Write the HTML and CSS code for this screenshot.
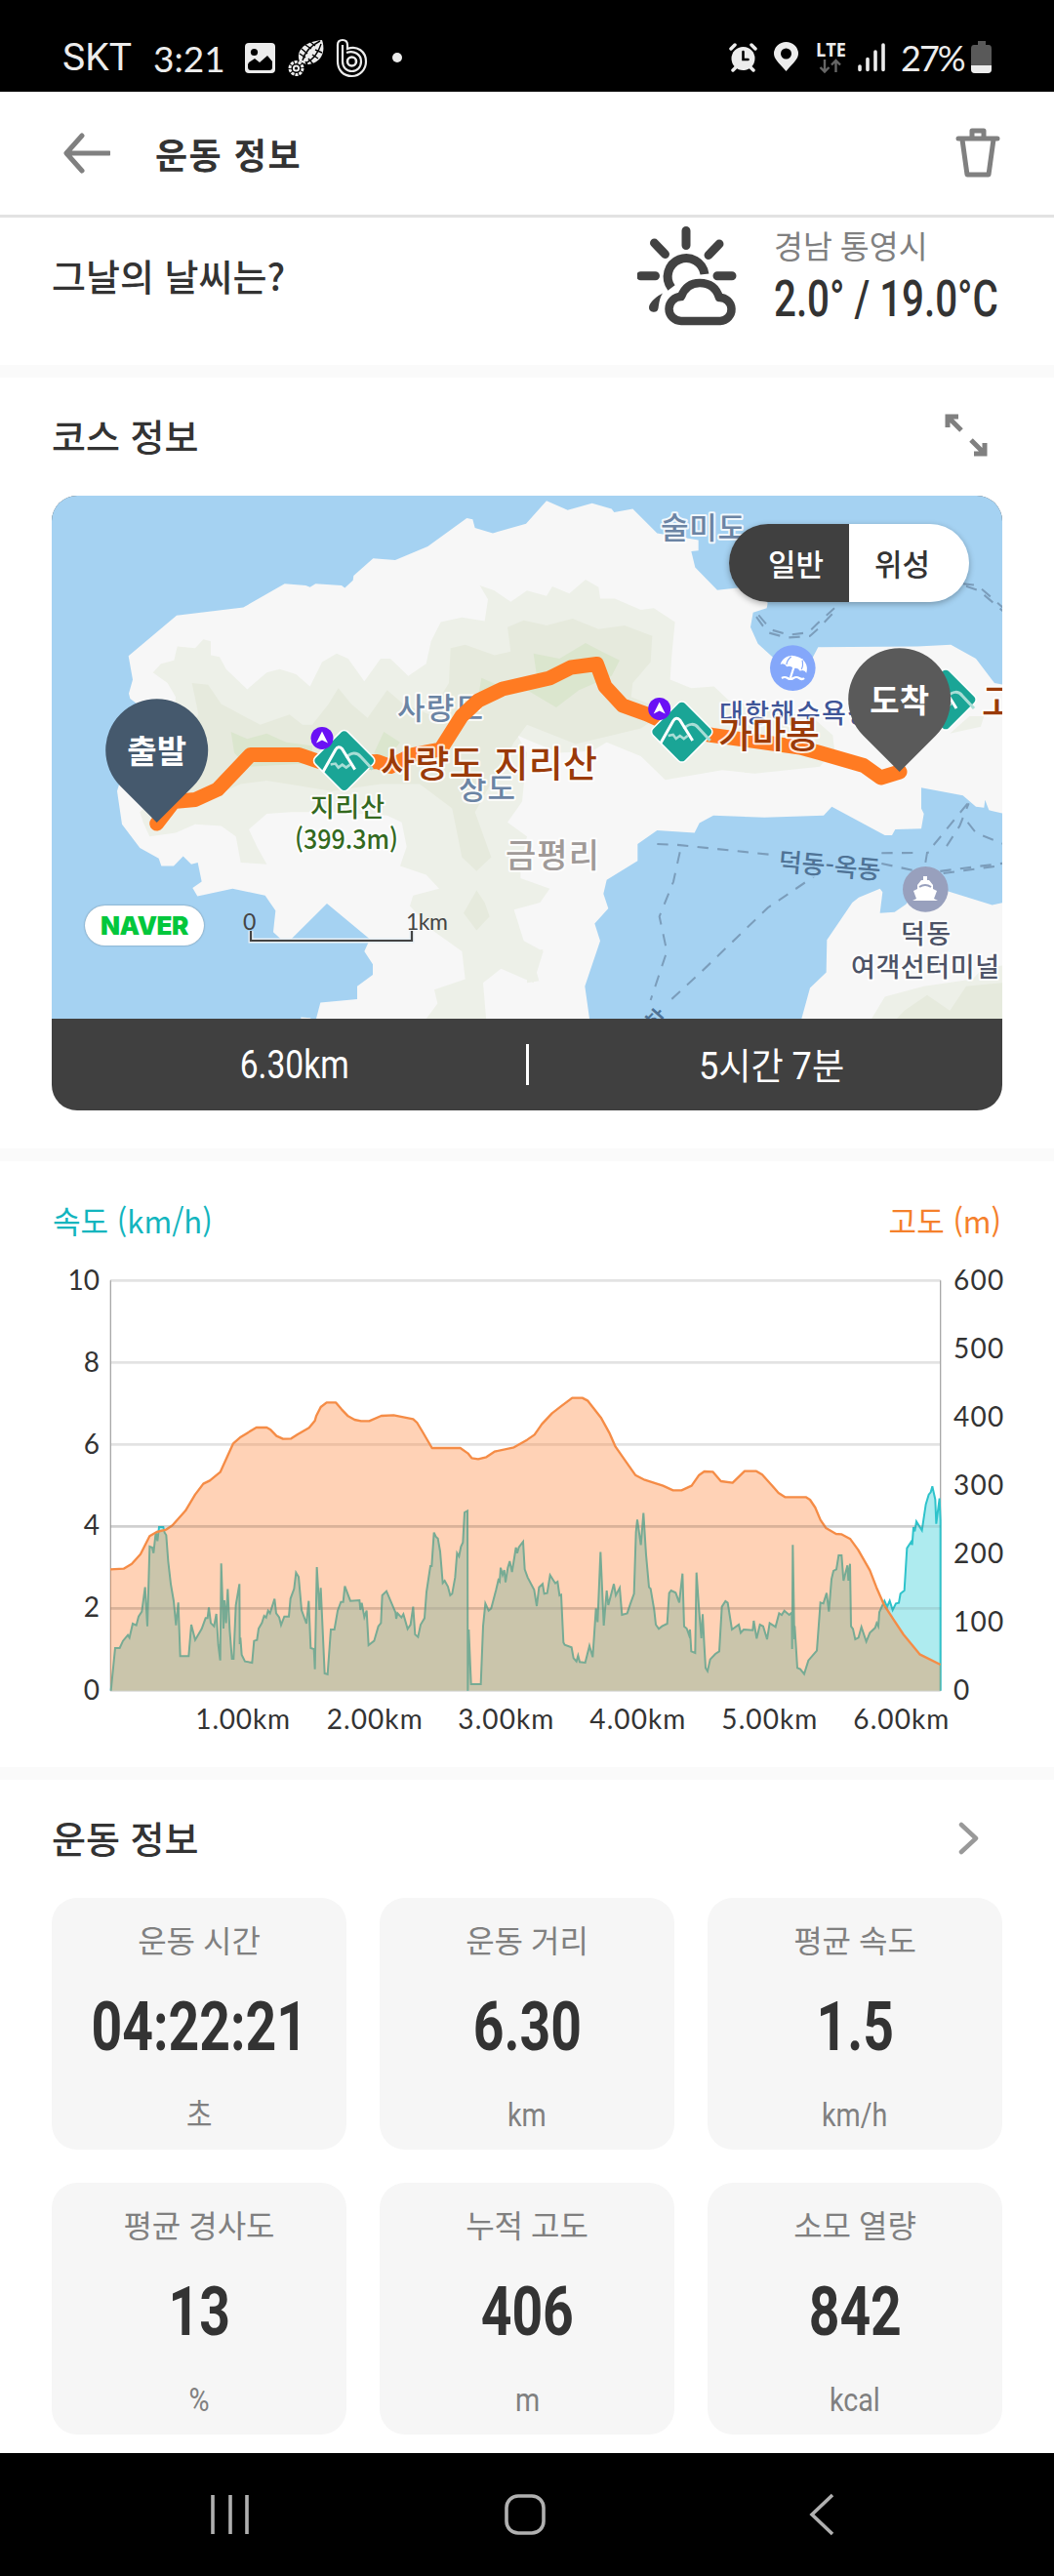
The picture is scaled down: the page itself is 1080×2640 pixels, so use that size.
FILE: index.html
```
<!DOCTYPE html>
<html lang="ko">
<head>
    <meta charset="UTF-8">
    <meta name="viewport" content="width=device-width, initial-scale=1.0">
    <title>운동 정보</title>
    <link rel="stylesheet" href="styles.css">
</head>
<body>
    <!-- Status bar -->
    <div class="status-bar">
        <span class="carrier">SKT</span>
        <span class="clock">3:21</span>
        <svg class="status-left" width="170" height="44" viewBox="250 37 170 44">
            <path d="M255 44h23q4 0 4 4v23q0 4-4 4h-23q-4 0-4-4v-23q0-4 4-4z" fill="#ececec"/>
            <circle cx="260.500" cy="53.500" r="3.600" fill="#000"/>
            <path d="M255 64l6-4 5 4 8-7 5 6v6q0 3-3 3h-19q-3 0-3-3v-3z" fill="#000"/>
            <path d="M307 63c-4-9 2-20 23-22 5 15-4 25-16 25z" fill="#ececec"/>
            <path d="M310 62c2-8 8-15 18-20M313 65c8-4 13-10 16-20" fill="none" stroke="#000" stroke-width="1.400"/>
            <path d="M307 55l6 4M309 50l6 5M313 46l6 4M318 43l5 4M316 60l5 6M320 56l6 4M323 51l7 3M313 63l3 5" stroke="#000" stroke-width="1.400"/>
            <circle cx="303.500" cy="70" r="6.500" fill="none" stroke="#ececec" stroke-width="3" stroke-dasharray="3 1"/>
            <circle cx="303.500" cy="70" r="2.600" fill="none" stroke="#ececec" stroke-width="2"/>
            <path d="M346 63V46q0-5 5-5t5 5v4c10-4 19 3 19 13 0 8-6 15-14.500 15S346 72 346 63z" fill="none" stroke="#ececec" stroke-width="2.200"/>
            <path d="M351 46v17M355 54c8-3 15 2 15 9 0 6-4 10-9.500 10S351 69 351 63" fill="none" stroke="#ececec" stroke-width="2.200"/>
            <circle cx="360.500" cy="63" r="4.500" fill="none" stroke="#ececec" stroke-width="2.600"/>
            <circle cx="407" cy="59" r="5" fill="#ececec"/>
        </svg>
        <svg class="status-right" width="166" height="44" viewBox="745 37 166 44">
            <g fill="#ececec" stroke="#ececec" stroke-linecap="round">
                <circle cx="761.500" cy="60" r="12" stroke="none"/>
                <path d="M749 50l4-4M774 50l-4-4M754 69l-3 3M769 69l3 3" stroke-width="3.500"/>
                <path d="M761.500 53v8h5" stroke="#000" stroke-width="2.600" fill="none"/>
            </g>
            <path d="M805.500 73c-8-9-12.500-13-12.500-18a12.500 12 0 0 1 25 0c0 5-4.500 9-12.500 18z" fill="#ececec"/>
            <circle cx="805.500" cy="55" r="5.500" fill="#000"/>
            <text class="lte" x="836" y="58" textLength="31" lengthAdjust="spacingAndGlyphs">LTE</text>
            <path d="M845 61v12M840.500 69l4.500 4.500 4.500-4.500M856.500 74V62M852 66.500l4.500-4.500 4.500 4.500" fill="none" stroke="#666" stroke-width="2.400"/>
            <path d="M881 68v3.500M889 60.500v11M897 53v18.500M905 46v25.500" stroke="#ececec" stroke-width="3.600" stroke-linecap="round"/>
        </svg>
        <span class="battery-text">27%</span>
        <svg class="battery" width="22" height="34" viewBox="0 0 22 34">
            <path d="M7 0h8v4h3q3 0 3 4v21q0 4-4 4H4q-4 0-4-4V8q0-4 3-4h4z" fill="#595959"/>
            <path d="M0 25h21v4q0 4-4 4H4q-4 0-4-4z" fill="#ececec"/>
        </svg>
    </div>

    <!-- App header -->
    <div class="app-header">
        <svg width="48" height="42" viewBox="0 0 48 42"><path d="M19 3L3 21l16 18M4 21h43" fill="none" stroke="#808080" stroke-width="5" stroke-linecap="round" stroke-linejoin="round"/></svg>
        <h1>운동 정보</h1>
        <svg class="trash" width="46" height="52" viewBox="0 0 46 52"><path d="M3 11h40M7 12l5 36h22l5-36M17 10V3h12v7" fill="none" stroke="#808080" stroke-width="5" stroke-linecap="round" stroke-linejoin="round"/></svg>
    </div>

    <!-- Weather -->
    <div class="section weather">
        <h2>그날의 날씨는?</h2>
        <svg class="weather-icon" width="102" height="104" viewBox="0 0 102 104">
            <path d="M50 4.500v15M17.500 17l11 11.500M84 18L73 29.500M3.500 50.700h15M82 50.700h15" fill="none" stroke="#424242" stroke-width="9" stroke-linecap="round"/>
            <path d="M35 63a19 19 0 1 1 34-14" fill="none" stroke="#424242" stroke-width="9"/>
            <path d="M26 68.500C21 71 12 78 12 83a4.800 4.800 0 0 0 9.500 1c1-5 1-10 4.500-15.500z" fill="#424242"/>
            <path d="M45 97H85a12 12 0 0 0-1-24C81 63 74 58 64 58S48 64 45 72a12.500 12.500 0 0 0 0 25z" fill="none" stroke="#424242" stroke-width="8.500" stroke-linejoin="round"/>
        </svg>
        <div class="weather-info">
            <span class="region">경남 통영시</span>
            <span class="temp">2.0° / 19.0°C</span>
        </div>
    </div>

    <!-- Course map -->
    <div class="section course">
        <div class="section-head">
            <h2>코스 정보</h2>
            <svg class="expand" width="44" height="44" viewBox="0 0 44 44"><path d="M3 14V3h11M3 3l14 14M41 30v11H30M41 41L27 27" fill="none" stroke="#808080" stroke-width="5"/></svg>
        </div>
        <div class="map-card">
            <svg class="map" width="974" height="536" viewBox="53 508 974 536">
                <defs>
                    <g id="peak">
                        <rect x="-23.500" y="-23.500" width="47" height="47" rx="5" transform="rotate(45)" fill="#1aa596" stroke="#fff" stroke-width="1.600"/>
                        <path d="M2-3c5-6 11-6 15-1l12 13" fill="none" stroke="#a9ded6" stroke-width="3"/>
                        <path d="M-14 4l5-1 3 4 4-3 4 3 4-3" fill="none" stroke="#a9ded6" stroke-width="2.600"/>
                        <path d="M-22 12L-9-11q3-5 7-1L11 9" fill="none" stroke="#fff" stroke-width="3"/>
                    </g>
                    <g id="spot">
                        <circle r="11.500" fill="#6a11f5"/>
                        <path d="M0-7l6 12-6-3-6 3z" fill="#fff"/>
                    </g>
                    <path id="pin" d="M0 0l-37-37a52.500 52.500 0 1 1 74 0z"/>
                </defs>
                <rect x="53" y="508" width="974" height="536" fill="#a5d2f2"/>
                <g transform="translate(40 500) scale(.33333 .35714)">
                    <!-- land -->
                    <path fill="#f7f7f7" d="M1560 37L1497 103 1395 130 1340 115 1333 90 1315 87 1195 168 1095 207 1027 202 967 252 965 265 940 287 930 280 850 275 833 285 820 280 755 275 628 343 423 366 275 482 288 550 276 590 280 605 330 640 245 855 240 870 255 965 310 1033 368 1063 376 1085 414 1085 443 1057 468 1080 488 1075 500 1130 472 1148 487 1172 595 1150 695 1170 727 1213 720 1275 755 1305 775 1295 885 1193 1017 1295 1000 1330 1026 1367 1026 1397 978 1430 978 1467 865 1477 850 1530H1693L1678 1430 1725 1300 1708 1250 1750 1207 1735 1165 1745 1125 1840 1070V1022L1900 983 2015 990 2030 962 2073 940 2230 946 2412 940 2437 915 2600 997 2622 997 2632 980 2712 978 2720 935 2712 920V860L2840 883 2880 915 2905 918 2908 895 2920 925 2965 935V565L2937 560 2880 490 2803 450 2700 455 2395 457 2382 480 2360 520 2290 510 2257 487 2210 447 2187 400 2195 358 2237 345 2240 330 2180 285 2140 288 2085 293 2017 228 2005 182 2027 180V150L1900 130 1825 60 1768 70 1760 60 1700 44 1625 64z"/>
                    <path fill="#f7f7f7" d="M2342 1530L2370 1435 2420 1390 2422 1297 2500 1190 2520 1175 2585 1150 2593 1160 2585 1220 2630 1217 2665 1195 2700 1150 2795 1158 2930 1197 2965 1190V1530zM805 1519l30 2v9h-30z"/>
                    <!-- hills -->
                    <path fill="#edf0e8" d="M350 530L375 505 415 495 425 455 480 460 505 435 528 440V480L555 485 575 520 640 578 700 530 740 520 790 535 833 570 870 500 915 475 950 490 1000 555 1050 490 1080 490 1135 540 1190 505 1205 440 1235 385 1300 372 1370 382 1380 320 1355 280 1400 295 1450 327 1500 295 1560 310 1578 283 1630 303 1680 263 1720 285 1725 318 1770 318 1850 350 1890 345 1955 385 1945 480 1940 550 2005 575 2075 570 2120 610 2380 660 2440 710 2445 750 2400 800 2200 820 2100 810 1925 838 1850 770 1745 730 1700 755 1600 760 1520 730 1470 710 1500 760 1485 900 1440 960 1500 1000 1480 1080V1120L1570 1150 1540 1190 1460 1210 1490 1300 1550 1330 1520 1420 1420 1380 1365 1420 1375 1530H1185L1225 1480 1215 1440 1310 1410 1300 1330 1210 1270 1140 1200 1150 1170 1230 1150 1190 1110 1110 1085 1130 1030 1115 960 1070 940 900 930 775 930 700 935 645 980 670 1030 700 1080 620 1075 605 1000 560 970 480 965 420 990 340 1000 320 960 310 930 400 850 420 600 395 560zM1500 1325h50l-25 50 12 40-37 5zM1500 1140l45 45-45 10zM2555 1530L2600 1460 2720 1430 2870 1410 2900 1380 2965 1370V1530zM2860 655h45l-10 30-95 20z"/>
                    <path fill="#e6eadd" d="M470 560L520 565 560 620 600 640 680 680 770 650 810 680 840 680 890 620 920 575 960 620 1010 660 1070 580 1120 620 1200 650 1260 560 1265 460 1310 450 1400 480 1450 470 1440 400 1490 380 1560 395 1640 375 1720 405 1800 395 1885 425 1880 500 1825 560 1820 600 1930 640 1850 690 1650 735 1500 680 1460 730 1400 830 1340 930 1390 1060 1345 1100 1300 1060 1270 920 1170 850 1050 850 900 870 700 840 620 850 500 900 430 900 460 700 490 650zM1345 1155L1370 1190 1385 1230 1345 1270 1305 1220zM2630 1530L2660 1500 2730 1455 2800 1500 2850 1430 2965 1420V1530z"/>
                    <path fill="#dbe6ce" d="M590 700L640 720 700 705 760 730 840 740V790L640 800 600 760zM1060 700L1110 730 1060 790 1030 760zM1520 475L1600 490 1680 445 1730 470 1785 495 1760 540 1660 580 1590 630 1500 580 1350 600 1360 545 1420 570 1530 540z"/>
                    <!-- ferry lines -->
                    <g class="ferry">
                        <path d="M2205 370L2240 415 2300 430 2370 425 2400 400 2455 345M2212 365L2250 407 2305 422 2365 415 2392 390 2445 345M2840 275L2885 280 2965 345M2850 282L2890 295 2965 355"/>
                        <path d="M1900 1022L1970 1025 2245 1052M1970 1045L1950 1130 1907 1230 1930 1330 1880 1470M1945 1467L2040 1385 2240 1205 2390 1110M2590 1048L2700 1047M2590 1078L2700 1100M2725 1075L2730 1047 2760 1040M2750 1025L2855 905M2790 1028L2830 970 2858 905M2855 960L2880 990 2965 1022M2770 1100L2965 1077M2780 1106L2965 1083"/>
                    </g>
                </g>
                <g class="map-label sea">
                    <text x="677" y="552" textLength="87">술미도</text>
                    <text x="407" y="737" textLength="88">사량도</text>
                    <text x="470" y="819" textLength="58">상도</text>
                </g>
                <text class="map-label village" x="518" y="889" textLength="96">금평리</text>
                <path class="route" d="M160.700 844L178 821.500 200 819.500 223 809 256.700 773.500H306.500L327 780.500 353 782 386.500 780.500 400 785.500 423 773.500 451.500 768 473 734 490 718 515 706 563 695 585 684 611.500 680.500 620 703.500 638 723 663 732 698 748 730 753.500 820 766 840 771.500 885 784.500 902.500 797 922 791"/>
                <text class="map-label beach" x="737" y="741" textLength="156">대항해수욕장</text>
                <circle cx="812.300" cy="684.600" r="23.300" fill="#84a7fa"/>
                <g transform="rotate(18 812 685)">
                    <path d="M799 685c0-8 6-13 14-13s14 5 14 13q-3-3-7 0-3-3-7 0-3-3-7 0-4-3-7 0z" fill="#fff"/>
                    <path d="M813 683v12M808 673q-4 5-2 11M818 673q4 5 2 11" fill="none" stroke="#fff" stroke-width="2.200"/>
                    <path d="M807 674q-3 5-2 9M819 674q3 5 2 9" fill="none" stroke="#84a7fa" stroke-width="1.200"/>
                </g>
                <path d="M801 695q3-2 6 0t6 0 6 0 5 0" fill="none" stroke="#fff" stroke-width="2.200"/>
                <circle cx="948.300" cy="911.400" r="23.300" fill="#98a0bd"/>
                <path d="M944 902h2v-4h4v4h2l4 5v4l4 2-3 8 4 2h-26l4-2-3-8 4-2v-4z" fill="#fff"/>
                <path d="M942 909q6-4 12 0" fill="none" stroke="#98a0bd" stroke-width="2"/>
                <use href="#peak" x="352.700" y="779.600"/>
                <use href="#spot" x="330" y="756.400"/>
                <use href="#peak" x="698.700" y="750"/>
                <use href="#spot" x="675.700" y="726.400"/>
                <use href="#peak" x="969" y="717"/>
                <g class="map-label mountain">
                    <text x="390" y="796" textLength="222">사량도 지리산</text>
                    <text x="736" y="766" textLength="104">가마봉</text>
                    <text x="1006" y="733">고</text>
                </g>
                <g class="map-label summit">
                    <text x="318" y="837" textLength="76">지리산</text>
                    <text x="302" y="870" textLength="106" lengthAdjust="spacingAndGlyphs">(399.3m)</text>
                </g>
                <text class="map-label line-name" textLength="105" transform="translate(797 892) rotate(5)">덕동-옥동</text>
                <text class="map-label line-name" transform="translate(672 1062) rotate(-48)">항</text>
                <g class="map-label harbor">
                    <text x="923" y="967" textLength="51">덕동</text>
                    <text x="872" y="1001" textLength="152">여객선터미널</text>
                </g>
                <use href="#pin" x="160.700" y="843" fill="#45596d"/>
                <text class="pin-text" x="160.700" y="782">출발</text>
                <use href="#pin" x="921.700" y="791" fill="#5a5a5a"/>
                <text class="pin-text" x="921.700" y="730">도착</text>
                <path d="M257 954v10h165v-10" fill="none" stroke="#e8f0f5" stroke-width="5"/>
                <path d="M257 954v10h165v-10" fill="none" stroke="#444" stroke-width="2.200"/>
                <text class="scale-text" x="249" y="953">0</text>
                <text class="scale-text" x="416" y="953" textLength="43">1km</text>
            </svg>
            <div class="map-toggle">
                <span class="on">일반</span>
                <span class="off">위성</span>
            </div>
            <div class="naver">NAVER</div>
            <div class="map-summary">
                <span><b>6.30km</b></span>
                <i></i>
                <span><b class="ko">5시간 7분</b></span>
            </div>
        </div>
    </div>

    <!-- Speed / altitude chart -->
    <div class="section chart-section">
        <div class="chart-head">
            <span class="speed-title">속도 (km/h)</span>
            <span class="alt-title">고도 (m)</span>
        </div>
        <svg class="chart" width="1000" height="520" viewBox="0 0 3000 1560">
            <path d="M219 67H2771M219 319H2771M219 571H2771M219 823H2771M219 1075H2771M219 1328H2771" stroke="#e3e3e3" stroke-width="8"/>
            <path d="M220 67V1328M2771 67V1328" stroke="#a8a8a8" stroke-width="4"/>
            <path class="speed" d="M221 1328L234 1197 248 1197 258 1175 273 1157 278 1165 288 1122 299 1127 306 1100 316 1085 326 1010 333 1130 340 885 348 888 352 905 359 840 364 868 369 825 382 825 386 842 391 850 397 930 405 1000 414 1053 421 1127 428 1057 434 1222 460 1222 468 1125 480 1172 500 1138 512 1105 518 1105 522 1072 528 1120 538 1130 545 1092 551 1188 557 1235 560 937 567 1137 570 1050 575 1120 580 1016 586 1140 593 1230 598 1230 605 1065 616 1000 617 1185 619 1165 623 1218 633 1238 655 1242 661 1175 670 1172 675 1137 685 1120 692 1098 698 1103 704 1082 710 1090 724 1046 729 1090 738 1102 744 1126 754 1100 768 1100 773 1045 784 1015 790 965 798 978 807 1080 822 1122 829 1052 835 1197 845 1200 848 1262 854 948 862 1080 866 1012 878 1275 887 1278 897 1140 908 1140 918 1082 928 1055 935 1055 940 1007 957 1052 985 1050 988 1080 992 1058 1000 1102 1007 1082 1013 1188 1030 1175 1043 1130 1051 1120 1055 1035 1068 1022 1096 1088 1098 1107 1102 1090 1114 1103 1120 1093 1133 1138 1142 1125 1150 1070 1156 1155 1165 1163 1173 1125 1185 1105 1191 1025 1203 945 1207 945 1214 842 1220 855 1226 860 1233 900 1241 997 1247 990 1257 1008 1264 1035 1270 1030 1279 980 1285 905 1291 915 1297 885 1303 872 1308 780 1317 775 1318 1328 1321 1140 1328 1308 1358 1308 1365 1130 1372 1060 1382 1082 1390 1075 1405 1018 1412 988 1416 993 1419 950 1425 972 1430 957 1434 995 1441 950 1447 930 1454 963 1466 888 1470 905 1475 887 1488 870 1493 955 1502 980 1522 1018 1530 1068 1537 1010 1548 1000 1553 1030 1562 1028 1571 973 1587 998 1594 993 1600 1035 1605 1033 1612 1180 1616 1187 1637 1195 1643 1228 1652 1238 1657 1220 1662 1240 1679 1242 1692 1190 1702 1225 1712 1075 1717 1117 1726 902 1736 1128 1745 1020 1750 1065 1767 1000 1773 1035 1785 1012 1792 1095 1808 1090 1818 1060 1829 1030 1835 840 1839 802 1850 880 1858 782 1866 910 1875 1010 1880 1015 1891 1080 1896 1125 1905 1138 1915 1130 1931 1122 1937 1028 1943 1020 1957 1027 1968 1057 1978 968 1983 1130 1991 1137 1998 1157 2001 1140 2005 1207 2017 1212 2021 965 2029 1080 2036 1167 2040 1093 2045 1190 2049 1258 2055 1268 2063 1232 2079 1215 2091 1207 2099 1070 2110 1053 2117 1058 2130 1140 2151 1125 2157 1150 2166 1140 2194 1142 2197 1113 2206 1168 2216 1125 2226 1130 2238 1170 2246 1120 2264 1132 2275 1090 2283 1095 2291 1082 2306 1095 2314 1088 2315 1200 2317 880 2322 1170 2323 1130 2331 1258 2340 1262 2352 1277 2365 1235 2391 1205 2402 1057 2411 1060 2421 1028 2428 1085 2436 985 2442 960 2451 955 2458 912 2467 912 2473 990 2485 943 2488 990 2493 938 2496 1130 2502 1138 2509 1170 2519 1165 2528 1132 2543 1177 2554 1150 2570 1135 2575 1120 2580 1130 2583 1087 2599 1052 2607 1070 2615 1052 2624 1080 2634 1060 2643 1058 2648 1030 2660 1020 2668 890 2681 870 2684 880 2688 825 2692 838 2697 808 2714 835 2726 755 2735 725 2741 718 2746 700 2755 740 2758 815 2768 737 2771 805V1328"/>
            <path class="alt-area" d="M219 955L260 953 285 938 312 908 340 853 362 840 390 833 410 820 450 775 480 725 505 692 525 682 557 656 597 568 620 548 668 519 700 519 712 526 730 545 750 554 775 553 795 540 830 520 848 498 852 484 866 456 884 442 912 442 930 463 950 484 970 495 990 499 1015 499 1052 483 1090 481 1150 493 1162 504 1180 534 1208 582 1295 582 1318 598 1330 613 1350 616 1375 610 1400 593 1460 580 1500 557 1523 541 1546 508 1577 475 1603 455 1639 428 1670 428 1686 436 1727 488 1753 535 1772 578 1805 625 1833 665 1862 680 1918 698 1949 712 1975 712 2006 698 2029 665 2045 654 2071 655 2096 684 2132 689 2169 653 2205 653 2223 664 2254 698 2273 720 2293 733 2357 733 2370 741 2386 765 2402 803 2419 828 2450 846 2466 847 2494 862 2518 895 2554 958 2574 1010 2598 1065 2626 1108 2657 1155 2707 1216 2771 1248V1328H219z"/>
            <path class="alt-line" d="M219 955L260 953 285 938 312 908 340 853 362 840 390 833 410 820 450 775 480 725 505 692 525 682 557 656 597 568 620 548 668 519 700 519 712 526 730 545 750 554 775 553 795 540 830 520 848 498 852 484 866 456 884 442 912 442 930 463 950 484 970 495 990 499 1015 499 1052 483 1090 481 1150 493 1162 504 1180 534 1208 582 1295 582 1318 598 1330 613 1350 616 1375 610 1400 593 1460 580 1500 557 1523 541 1546 508 1577 475 1603 455 1639 428 1670 428 1686 436 1727 488 1753 535 1772 578 1805 625 1833 665 1862 680 1918 698 1949 712 1975 712 2006 698 2029 665 2045 654 2071 655 2096 684 2132 689 2169 653 2205 653 2223 664 2254 698 2273 720 2293 733 2357 733 2370 741 2386 765 2402 803 2419 828 2450 846 2466 847 2494 862 2518 895 2554 958 2574 1010 2598 1065 2626 1108 2657 1155 2707 1216 2771 1248"/>
            <path d="M219 823H2771M219 1075H2771" stroke="#555" stroke-opacity=".13" stroke-width="8"/>
            <g class="axis end">
                <text x="186" y="95">10</text>
                <text x="186" y="347">8</text>
                <text x="186" y="599">6</text>
                <text x="186" y="850">4</text>
                <text x="186" y="1102">2</text>
                <text x="186" y="1355">0</text>
            </g>
            <g class="axis">
                <text x="2811" y="95" textLength="154">600</text>
                <text x="2811" y="305" textLength="154">500</text>
                <text x="2811" y="515" textLength="154">400</text>
                <text x="2811" y="725" textLength="154">300</text>
                <text x="2811" y="935" textLength="154">200</text>
                <text x="2811" y="1145" textLength="154">100</text>
                <text x="2811" y="1355">0</text>
                <text x="481" y="1446" textLength="290">1.00km</text>
                <text x="884" y="1446" textLength="294">2.00km</text>
                <text x="1288" y="1446" textLength="294">3.00km</text>
                <text x="1693" y="1446" textLength="294">4.00km</text>
                <text x="2098" y="1446" textLength="294">5.00km</text>
                <text x="2503" y="1446" textLength="294">6.00km</text>
            </g>
        </svg>
    </div>

    <!-- Workout stats -->
    <div class="section stats">
        <div class="section-head">
            <h2>운동 정보</h2>
            <svg class="chevron" width="22" height="34" viewBox="0 0 22 34"><path d="M3 3l15 14L3 31" fill="none" stroke="#999" stroke-width="4.500" stroke-linecap="round" stroke-linejoin="round"/></svg>
        </div>
        <div class="stat-grid">
            <div class="stat"><span class="name">운동 시간</span><span class="value">04:22:21</span><span class="unit">초</span></div>
            <div class="stat"><span class="name">운동 거리</span><span class="value">6.30</span><span class="unit">km</span></div>
            <div class="stat"><span class="name">평균 속도</span><span class="value">1.5</span><span class="unit">km/h</span></div>
            <div class="stat"><span class="name">평균 경사도</span><span class="value">13</span><span class="unit">%</span></div>
            <div class="stat"><span class="name">누적 고도</span><span class="value">406</span><span class="unit">m</span></div>
            <div class="stat"><span class="name">소모 열량</span><span class="value">842</span><span class="unit">kcal</span></div>
        </div>
    </div>

    <!-- Navigation bar -->
    <div class="nav-bar">
        <svg width="40" height="42" viewBox="0 0 40 42"><path d="M2 1v40M20 1v40M37 1v40" stroke="#b0b0b0" stroke-width="3.600"/></svg>
        <svg class="nav-home" width="42" height="42" viewBox="0 0 42 42"><rect x="2" y="2" width="38" height="38" rx="12" fill="none" stroke="#b0b0b0" stroke-width="3.600"/></svg>
        <svg class="nav-back" width="26" height="44" viewBox="0 0 26 44"><path d="M24 2L3 22l21 20" fill="none" stroke="#b0b0b0" stroke-width="3.600"/></svg>
    </div>
</body>
</html>
```
FILE: styles.css
```
* {
    box-sizing: border-box;
}

body {
    margin: 0;
    width: 1080px;
    background: #fafafa;
    color: #333;
    font-family: Roboto, 'Noto Sans CJK KR', sans-serif;
}

svg {
    display: block;
    flex: none;
}

h1, h2 {
    margin: 0;
    font-family: 'Noto Sans CJK KR', sans-serif;
    white-space: nowrap;
}

h2 {
    font-size: 38px;
    font-weight: 500;
    line-height: 50px;
}

/* Status bar */
.status-bar {
    display: flex;
    align-items: center;
    height: 94px;
    padding: 24px 0 0 64px;
    background: #000;
    color: #ececec;
}

.carrier {
    width: 93px;
    font-size: 39px;
}

.clock {
    width: 93px;
    font-family: Lato, sans-serif;
    font-size: 37px;
}

.status-right {
    margin-left: 325px;
}

.lte {
    fill: #ececec;
    font-family: 'Open Sans', sans-serif;
    font-size: 20px;
    font-weight: 700;
}

.battery-text {
    width: 84px;
    padding-left: 12px;
    font-family: Lato, sans-serif;
    font-size: 36px;
    letter-spacing: -2px;
}

/* Header */
.app-header {
    display: flex;
    align-items: center;
    height: 129px;
    padding: 0 55px 1px 65px;
    background: #fff;
    border-bottom: 3px solid #e2e2e2;
}

.app-header h1 {
    margin-left: 46px;
    font-size: 36px;
    font-weight: 700;
    line-height: 50px;
    letter-spacing: 1.5px;
}

.trash {
    margin-left: auto;
}

.section {
    background: #fff;
    margin-bottom: 13px;
}

/* Weather */
.weather {
    display: flex;
    height: 151px;
    padding: 9px 53px 0;
}

.weather h2 {
    margin-top: 25px;
}

.weather-icon {
    margin-left: auto;
}

.weather-info {
    display: flex;
    flex-direction: column;
    width: 234px;
    margin-left: 38px;
    white-space: nowrap;
}

.region {
    margin-top: 1px;
    color: #808080;
    font-size: 32.5px;
    line-height: 42px;
}

.temp {
    font-size: 52px;
    font-weight: 500;
    line-height: 64px;
    transform: scaleX(.775);
    transform-origin: left;
}

/* Course */
.course {
    height: 790px;
    padding: 34px 53px 0;
}

.section-head {
    display: flex;
    justify-content: space-between;
    align-items: center;
    height: 50px;
}

.expand {
    margin-right: 15px;
}

.map-card {
    position: relative;
    height: 630px;
    margin-top: 37px;
    border-radius: 26px;
    overflow: hidden;
    background: #404040;
}

.map-label {
    font-family: 'Noto Sans CJK KR', sans-serif;
    font-weight: 500;
    stroke: #fff;
    stroke-opacity: .85;
    stroke-width: 4px;
    stroke-linejoin: round;
    paint-order: stroke;
}

.sea {
    fill: #6b84a4;
    font-size: 31px;
}

.village {
    fill: #a09a98;
    font-size: 34px;
}

.beach {
    fill: #3f5598;
    font-size: 27px;
}

.mountain {
    fill: #9a3a08;
    font-size: 38px;
}

.summit {
    fill: #33691e;
    font-size: 27px;
}

.line-name {
    fill: #4f7396;
    font-size: 26px;
    stroke: #a5d2f2;
}

.harbor {
    fill: #4d5366;
    font-size: 27px;
}

.route {
    fill: none;
    stroke: #ff7b22;
    stroke-width: 15;
    stroke-linecap: round;
    stroke-linejoin: round;
}

.ferry {
    fill: none;
    stroke: #7b9dbb;
    stroke-width: 6;
    stroke-dasharray: 34 28;
}

.pin-text {
    fill: #fff;
    font-family: 'Noto Sans CJK KR', sans-serif;
    font-size: 33px;
    font-weight: 700;
    text-anchor: middle;
}

.scale-text {
    fill: #444;
    font-family: Lato, sans-serif;
    font-size: 23px;
}

.map-toggle {
    position: absolute;
    top: 29px;
    right: 34px;
    display: flex;
    width: 246px;
    height: 80px;
    border-radius: 40px;
    overflow: hidden;
    box-shadow: 0 2px 6px rgba(0, 0, 0, 0.3);
    font-family: 'Noto Sans CJK KR', sans-serif;
    font-size: 31px;
    font-weight: 500;
    line-height: 79px;
    text-align: center;
}

.map-toggle span {
    width: 123px;
}

.on {
    padding-left: 14px;
    background: #404040;
    color: #fff;
}

.off {
    padding-right: 14px;
    background: #fff;
}

.naver {
    position: absolute;
    left: 34px;
    top: 420px;
    width: 122px;
    height: 41px;
    border-radius: 21px;
    background: #fff;
    box-shadow: 0 0 2px rgba(0, 0, 0, 0.4);
    color: #03c73c;
    font-family: Inter, sans-serif;
    font-size: 26px;
    font-weight: 900;
    line-height: 41px;
    text-align: center;
    letter-spacing: -.5px;
}

.map-summary {
    display: flex;
    align-items: center;
    height: 94px;
    color: #fff;
}

.map-summary span {
    flex: 1;
    padding-left: 12px;
    text-align: center;
}

.map-summary b {
    display: inline-block;
    font-size: 40px;
    font-weight: 400;
    transform: scaleX(.84);
}

.map-summary .ko {
    padding-bottom: 4px;
    font-size: 38px;
    transform: scaleX(.95);
}

.map-summary i {
    width: 3px;
    height: 42px;
    background: #fff;
}

/* Chart */
.chart-section {
    height: 621px;
    padding-top: 36px;
}

.chart-head {
    display: flex;
    justify-content: space-between;
    padding: 0 54px;
    font-family: 'Noto Sans CJK KR', sans-serif;
    font-size: 32px;
    line-height: 48px;
}

.speed-title {
    color: #12b5be;
    transform: scaleX(.97);
    transform-origin: left;
}

.alt-title {
    color: #f5802b;
    transform: scaleX(.97);
    transform-origin: right;
}

.chart {
    margin: 16px 0 0 40px;
}

.speed {
    fill: #aaeaee;
    fill-opacity: .95;
    stroke: #2ec3cb;
    stroke-width: 6;
}

.alt-area {
    fill: rgba(255, 126, 46, 0.35);
}

.alt-line {
    fill: none;
    stroke: #f58c46;
    stroke-width: 7;
    stroke-linejoin: round;
}

.axis {
    fill: #333;
    font-family: Lato, sans-serif;
    font-size: 84px;
}

.end {
    text-anchor: end;
}

/* Stats */
.stats {
    height: 690px;
    margin-bottom: 0;
    padding: 35px 53px 0;
}

.stats h2 {
    padding-bottom: 2px;
}

.chevron {
    margin-right: 23px;
}

.stat-grid {
    display: grid;
    grid-template-columns: repeat(3, 302px);
    gap: 34px;
    margin-top: 36px;
}

.stat {
    display: flex;
    flex-direction: column;
    align-items: center;
    height: 258px;
    padding-top: 23px;
    border-radius: 26px;
    background: #f6f6f6;
}

.name {
    height: 44px;
    color: #808080;
    font-size: 32px;
    line-height: 44px;
}

.value {
    margin-top: 25px;
    font-size: 70px;
    font-weight: 700;
    line-height: 80px;
    transform: scaleX(.79);
}

.unit {
    margin-top: 31px;
    color: #808080;
    font-size: 33px;
    line-height: 40px;
    transform: scaleX(.87);
}

/* Navigation bar */
.nav-bar {
    display: flex;
    align-items: center;
    height: 126px;
    padding-left: 216px;
    background: #000;
}

.nav-home {
    margin-left: 261px;
}

.nav-back {
    margin-left: 270px;
}
```
